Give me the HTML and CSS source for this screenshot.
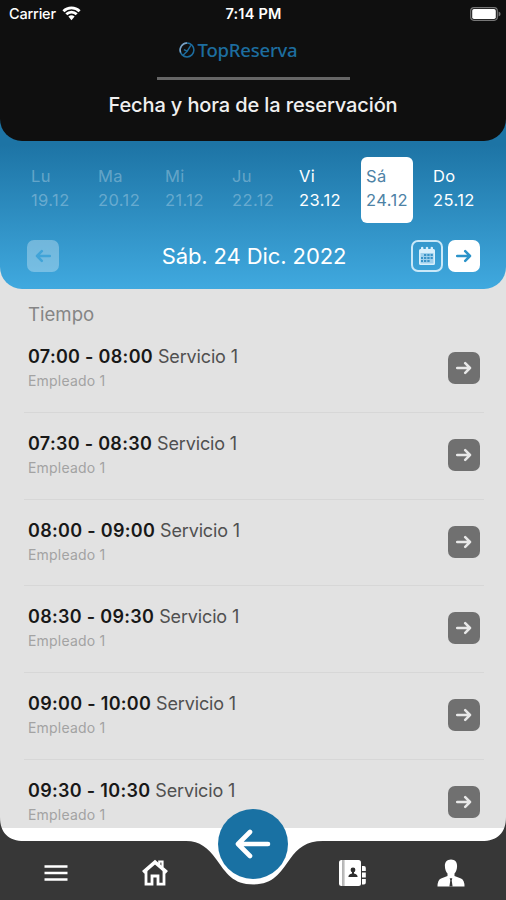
FILE: index.html
```
<!DOCTYPE html>
<html lang="es">

<head>
  <meta charset="UTF-8">
  <meta name="viewport" content="width=device-width, initial-scale=1.0">
  <title>TopReserva</title>
  <link rel="stylesheet" href="styles.css">
</head>

<body>

  <!-- icons -->
  <svg class="sprite" aria-hidden="true">
    <symbol id="arrow" viewBox="0 0 16 14">
      <path d="M1.2 7H14M9.2 2.2L14 7L9.2 11.8" fill="none" stroke="currentColor" stroke-width="2.5" stroke-linecap="round" stroke-linejoin="round" />
    </symbol>
  </svg>

  <div class="screen">
    <header class="header">
      <div class="status">
        <div class="carrier">
          <span>Carrier</span>
          <svg width="19" height="15" viewBox="0 0 19 15">
            <path d="M1.4 5.2A11.5 11.5 0 0 1 17.6 5.2M4.3 8.3A7.4 7.4 0 0 1 14.7 8.3" fill="none" stroke="#fff" stroke-width="2.8" />
            <path d="M6.4 10.6A4.5 4.5 0 0 1 12.6 10.6L9.5 14.2Z" fill="#fff" />
          </svg>
        </div>
        <span class="clock">7:14 PM</span>
        <svg class="battery" width="31" height="14" viewBox="0 0 31 14">
          <rect x="0.7" y="0.7" width="26.6" height="12.6" rx="3.2" fill="none" stroke="#777" stroke-width="1.2" />
          <rect x="2.2" y="2" width="23.6" height="10" rx="1.8" fill="#fff" />
          <path d="M28.6 4.6Q30.6 5.4 30.6 7Q30.6 8.6 28.6 9.4Z" fill="#777" />
        </svg>
      </div>
      <div class="brand">
        <svg width="16" height="16" viewBox="0 0 16 16">
          <circle cx="8" cy="8" r="6.9" fill="none" stroke="#1d6d9f" stroke-width="1.5" />
          <path d="M1.6 10.4A6.9 6.9 0 0 1 8 1.1" fill="none" stroke="#7d9fc0" stroke-width="1.5" />
          <path d="M11.8 3.4L8.2 9.2L4 13.2M4.9 7.6L8.2 9.2" fill="none" stroke="#1d6d9f" stroke-width="1.4" />
        </svg>
        <span>TopReserva</span>
      </div>
      <h1>Fecha y hora de la reservación</h1>
    </header>

    <section class="calendar">
      <div class="days">
        <div class="day off"><span>Lu</span><span>19.12</span></div>
        <div class="day off"><span>Ma</span><span>20.12</span></div>
        <div class="day off"><span>Mi</span><span>21.12</span></div>
        <div class="day off"><span>Ju</span><span>22.12</span></div>
        <div class="day"><span>Vi</span><span>23.12</span></div>
        <div class="day active"><span>Sá</span><span>24.12</span></div>
        <div class="day"><span>Do</span><span>25.12</span></div>
      </div>
      <div class="picker">
        <button class="btn prev"><svg class="flip" width="16" height="14"><use href="#arrow" /></svg></button>
        <h2>Sáb. 24 Dic. 2022</h2>
        <div class="picker-right">
          <button class="btn outline">
            <svg width="18" height="20" viewBox="0 0 18 20">
              <path d="M1 4.5Q1 3 2.5 3H3V1.5Q4.2 0 5.4 1.5V3H7.8V1.5Q9 0 10.2 1.5V3H12.6V1.5Q13.8 0 15 1.5V3H15.5Q17 3 17 4.5V17.5Q17 19 15.5 19H2.5Q1 19 1 17.5Z" fill="#d9effb" />
              <path d="M2.5 7H15.5V17.5H2.5Z" fill="#9fd0ec" />
              <path d="M6 8H8.3V10H6ZM9.3 8H11.6V10H9.3ZM12.6 8H14.8V10H12.6ZM3 11H5V13H3ZM6 11H8.3V13H6ZM9.3 11H11.6V13H9.3ZM12.6 11H14.8V13H12.6ZM3 14H5V16H3ZM6 14H8.3V16H6ZM9.3 14H11.6V16H9.3Z" fill="#3a93c7" />
            </svg>
          </button>
          <button class="btn next"><svg width="16" height="14"><use href="#arrow" /></svg></button>
        </div>
      </div>
    </section>

    <main class="slots">
      <h3>Tiempo</h3>
      <ul class="list">
        <li class="slot">
          <div><p><b>07:00 - 08:00</b> Servicio 1</p><small>Empleado 1</small></div>
          <button class="btn go"><svg width="16" height="14"><use href="#arrow" /></svg></button>
        </li>
        <li class="slot">
          <div><p><b>07:30 - 08:30</b> Servicio 1</p><small>Empleado 1</small></div>
          <button class="btn go"><svg width="16" height="14"><use href="#arrow" /></svg></button>
        </li>
        <li class="slot">
          <div><p><b>08:00 - 09:00</b> Servicio 1</p><small>Empleado 1</small></div>
          <button class="btn go"><svg width="16" height="14"><use href="#arrow" /></svg></button>
        </li>
        <li class="slot">
          <div><p><b>08:30 - 09:30</b> Servicio 1</p><small>Empleado 1</small></div>
          <button class="btn go"><svg width="16" height="14"><use href="#arrow" /></svg></button>
        </li>
        <li class="slot">
          <div><p><b>09:00 - 10:00</b> Servicio 1</p><small>Empleado 1</small></div>
          <button class="btn go"><svg width="16" height="14"><use href="#arrow" /></svg></button>
        </li>
        <li class="slot">
          <div><p><b>09:30 - 10:30</b> Servicio 1</p><small>Empleado 1</small></div>
          <button class="btn go"><svg width="16" height="14"><use href="#arrow" /></svg></button>
        </li>
      </ul>
    </main>

    <nav class="tabbar">
      <!-- bar shape with the notch for the round button -->
      <svg class="tabbar-bg" width="506" height="92" viewBox="0 0 506 92">
        <path d="M0 20H506V40H0Z" fill="#fff" />
        <path d="M180 32H326L290 70Q275 76 253 76Q231 76 216 70Z" fill="#fff" />
        <path d="M0 9C0 25 9 33 24 33H186C200 33 208 40 216 51C226 65 233 76.500 253 76.500C273 76.500 280 65 290 51C298 40 306 33 323 33H482C497 33 506 25 506 9V92H0Z" fill="#373737" />
      </svg>
      <div class="tabs">
        <a class="tab">
          <svg width="24" height="18" viewBox="0 0 24 18">
            <path d="M0.500 2.500H23.500M0.500 9H23.500M0.500 15.500H23.500" stroke="#fff" stroke-width="2.700" />
          </svg>
        </a>
        <a class="tab">
          <svg width="28" height="28" viewBox="0 0 28 28">
            <path d="M18.300 5V2.500H21.500V8" fill="none" stroke="#fff" stroke-width="2.200" />
            <path d="M5 12V25.200H11V17H17V25.200H23V12" fill="none" stroke="#fff" stroke-width="2.800" />
            <path d="M2.200 13.300L14 3.200L25.800 13.300" fill="none" stroke="#fff" stroke-width="3.600" />
          </svg>
        </a>
        <a class="round"><svg width="36" height="30" viewBox="0 0 36 30">
            <path d="M33 15H3.500M15 3L3 15L15 27" fill="none" stroke="#fff" stroke-width="4.600" stroke-linecap="round" stroke-linejoin="round" />
          </svg></a>
        <a class="tab contacts">
          <svg width="30" height="28" viewBox="0 0 30 28">
            <path d="M3.500 1H4.600V27H3.500Q1 27 1 24.500V3.500Q1 1 3.500 1Z" fill="#fff" />
            <path d="M5.600 1H20.500Q23 1 23 3.500V24.500Q23 27 20.500 27H5.600Z" fill="#fff" />
            <path d="M4.600 1H6.600V27H4.600Z" fill="#bbb" />
            <path d="M24 7H26Q27.800 7 27.800 9V12H24ZM24 13.500H27.800V18.500H24ZM24 20H27.800V23.500Q27.800 25.500 26 25.500H24Z" fill="#fff" />
            <circle cx="15" cy="11" r="2.400" fill="#2d2d2d" />
            <path d="M14 12H16V14.500Q19.600 15 19.600 18H10.400Q10.400 15 14 14.500Z" fill="#2d2d2d" />
          </svg>
        </a>
        <a class="tab profile">
          <svg width="28" height="28" viewBox="0 0 28 28">
            <path d="M14 0.500C18 0.500 20.300 3.300 20.100 7C20 10.500 19 13 17.500 14.500V17L24 19.500Q27.500 21 27.500 27.500H0.500Q0.500 21 4 19.500L10.500 17V14.500C9 13 8 10.500 7.900 7C7.700 3.300 10 0.500 14 0.500Z" fill="#fff" />
            <path d="M12.700 19.200H15.300L14.700 21.500L15.600 27.500H12.400L13.300 21.500Z" fill="#373737" />
          </svg>
        </a>
      </div>
    </nav>
  </div>

</body>

</html>
```
FILE: styles.css
```
* {
  box-sizing: border-box;
}

html,
body {
  margin: 0;
  padding: 0;
}

body {
  font-family: Inter, "Liberation Sans", sans-serif;
}

h1,
h2,
h3,
p,
ul {
  margin: 0;
  padding: 0;
  font-weight: 400;
}

.sprite {
  display: none;
}

.screen {
  position: relative;
  display: flex;
  flex-direction: column;
  width: 506px;
  height: 900px;
  overflow: hidden;
  background-color: #e2e2e2;
}

/* header */
.header {
  position: relative;
  z-index: 1;
  flex: none;
  display: flex;
  flex-direction: column;
  align-items: center;
  height: 141px;
  background-color: #0f0f0f;
  border-radius: 0 0 22px 22px;
  color: #fff;
}

.status {
  display: grid;
  grid-template-columns: 1fr auto 1fr;
  align-items: center;
  width: 100%;
  height: 27px;
  padding: 0 5px 0 9px;
  font-size: 14.5px;
  font-weight: 500;
}

.carrier {
  display: flex;
  align-items: center;
  gap: 6px;
  letter-spacing: -0.2px;
}

.clock {
  padding-right: 3px;
  font-weight: 600;
  letter-spacing: 0.2px;
}

.battery {
  justify-self: end;
}

.brand {
  display: flex;
  align-items: center;
  gap: 3px;
  width: 193px;
  height: 53px;
  padding: 0 0 5px 22px;
  border-bottom: 3px solid #666;
  font-family: "Noto Sans", sans-serif;
  font-size: 18.5px;
  font-weight: 500;
  letter-spacing: -0.2px;
  color: #1d6d9f;
}

h1 {
  margin-top: 10px;
  font-size: 20px;
  line-height: 30px;
  font-weight: 500;
  letter-spacing: -0.12px;
  color: #f0f0f0;
}

/* calendar */
.calendar {
  flex: none;
  height: 170px;
  margin-top: -22px;
  padding: 38px 26px 0 27px;
  background: linear-gradient(#1d74a5 15%, #40a9df);
  border-radius: 0 0 22px 22px;
  color: #fff;
}

.days {
  display: flex;
  gap: 15px;
  margin-left: -1px;
}

.day {
  flex: none;
  display: flex;
  flex-direction: column;
  width: 52px;
  height: 66px;
  padding: 7px 0 0 5px;
  border-radius: 6px;
  font-size: 16.5px;
  line-height: 24px;
  letter-spacing: 0.4px;
  white-space: nowrap;
}

.day.off {
  color: rgba(255, 255, 255, 0.3);
}

.day.active {
  background-color: #fff;
  color: #4d82a5;
}

.picker {
  display: flex;
  align-items: center;
  justify-content: space-between;
  margin-top: 17px;
}

.picker-right {
  display: flex;
  gap: 5px;
}

h2 {
  padding-left: 38px;
  font-size: 22px;
  line-height: 32px;
  letter-spacing: -0.1px;
}

.btn {
  display: flex;
  align-items: center;
  justify-content: center;
  width: 32px;
  height: 32px;
  padding: 0;
  border: none;
  border-radius: 7px;
}

.prev {
  background-color: rgba(255, 255, 255, 0.3);
  color: #41a4d8;
}

.outline {
  border: 2px solid #c9e8f8;
  background: none;
}

.next {
  background-color: #fff;
  color: #2b93c9;
}

.go {
  background-color: #707070;
  color: #e8e8e8;
}

.flip {
  transform: scaleX(-1);
}

/* time slots */
.slots {
  padding: 14px 22px 0 24px;
}

h3 {
  padding-left: 4px;
  font-size: 18.6px;
  line-height: 23px;
  color: #858585;
}

.list {
  list-style: none;
}

.slot {
  display: flex;
  justify-content: space-between;
  height: 86.8px;
  padding: 19px 4px 0;
  border-bottom: 1px solid #d7d7d7;
}

.slot p {
  font-size: 18px;
  line-height: 24px;
  letter-spacing: -0.15px;
  color: #505050;
}

.slot b {
  font-weight: 600;
  letter-spacing: 0.3px;
  color: #181818;
}

.slot small {
  display: block;
  font-size: 14px;
  line-height: 24px;
  letter-spacing: 0.2px;
  color: #a3a3a3;
}

.slot .btn {
  margin-top: 7px;
}

/* bottom bar, drawn over the end of the list */
.tabbar {
  position: absolute;
  left: 0;
  bottom: 0;
  width: 506px;
  height: 92px;
}

.tabbar-bg {
  position: absolute;
  left: 0;
  top: 0;
}

.tabs {
  position: relative;
  display: grid;
  grid-template-columns: 112px 86px 110px 86px 112px;
}

.tab {
  display: flex;
  align-items: center;
  justify-content: center;
  height: 92px;
  padding-top: 38px;
}

.contacts {
  padding-left: 3px;
}

.profile {
  padding-left: 2px;
}

.round {
  display: flex;
  align-items: center;
  justify-content: center;
  justify-self: center;
  width: 70px;
  height: 70px;
  margin-top: 1px;
  border-radius: 50%;
  background-color: #1971a3;
}
```
